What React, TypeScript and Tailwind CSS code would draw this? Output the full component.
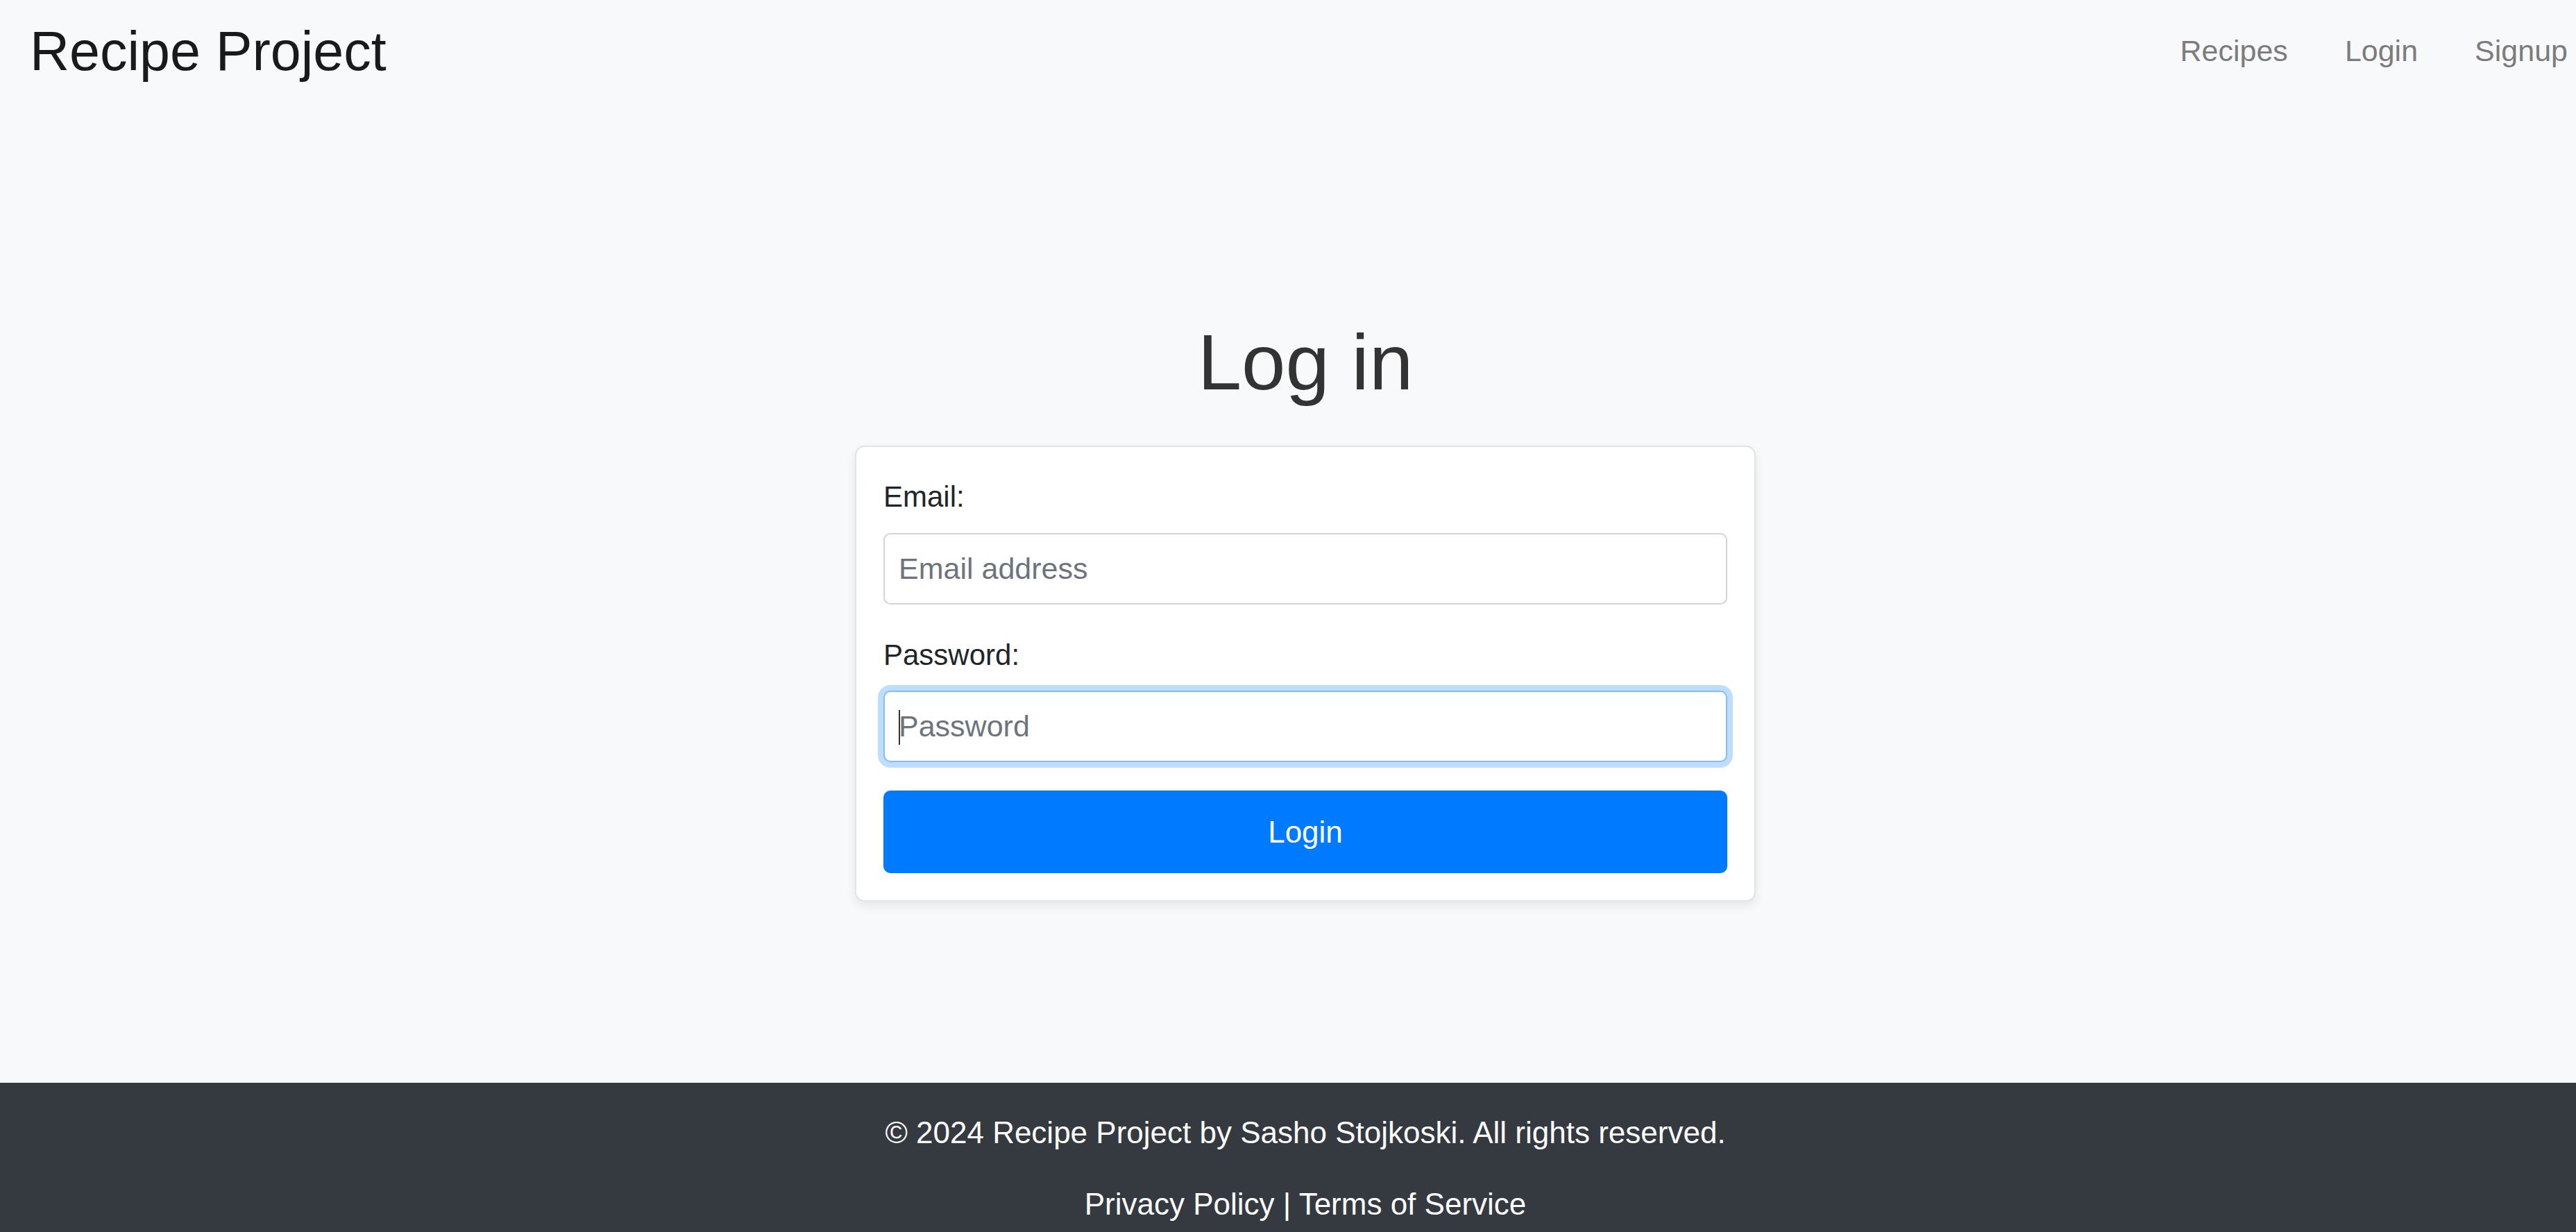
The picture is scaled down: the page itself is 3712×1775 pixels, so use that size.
import { useState } from 'react';

const font = { fontFamily: '"Liberation Sans", Arial, sans-serif' };

function Navbar() {
  return (
    <header className="h-[146px] flex items-center justify-between pl-[43px] pr-[12px]">
      <a href="#" className="text-[79px] leading-none text-[#191a1a]">
        Recipe Project
      </a>
      <nav className="flex items-center gap-[82px] text-[43px] leading-none text-[#7c7c7d]">
        <a href="#">Recipes</a>
        <a href="#">Login</a>
        <a href="#">Signup</a>
      </nav>
    </header>
  );
}

function LoginForm() {
  const [email, setEmail] = useState('');
  const [password, setPassword] = useState('');

  return (
    <div className="w-[1298px] bg-white border-2 border-[#e3e3e3] rounded-[14px] shadow-[0_6px_14px_rgba(0,0,0,0.08)] px-[39px] pt-[40px] pb-[39px]">
      <form onSubmit={(e) => e.preventDefault()} className="flex flex-col">
        <label className="text-[42px] leading-[63px] text-[#212529]">Email:</label>
        <input
          type="email"
          value={email}
          onChange={(e) => setEmail(e.target.value)}
          placeholder="Email address"
          className="mt-[21px] h-[103px] w-full rounded-[10px] border-2 border-[#d0d4d8] bg-white px-[20px] text-[43px] text-[#495057] placeholder:text-[#6c757d] outline-none"
        />
        <label className="mt-[41px] text-[42px] leading-[63px] text-[#212529]">Password:</label>
        <div className="relative mt-[20px]">
          <input
            type="password"
            value={password}
            onChange={(e) => setPassword(e.target.value)}
            placeholder="Password"
            className="h-[103px] w-full rounded-[10px] border-2 border-[#80bdff] bg-white px-[20px] text-[43px] text-[#495057] placeholder:text-[#6c757d] outline-none shadow-[0_0_0_8px_rgba(0,123,255,0.25)]"
          />
          {password === '' && (
            <span className="absolute left-[22px] top-[28px] h-[50px] w-[2px] bg-[#333]" />
          )}
        </div>
        <button
          type="submit"
          className="mt-[41px] h-[119px] w-full rounded-[10px] bg-[#007bff] text-[44px] text-white"
        >
          Login
        </button>
      </form>
    </div>
  );
}

export default function App() {
  return (
    <div style={font} className="h-[1775px] flex flex-col bg-[#f8f9fa] overflow-hidden">
      <Navbar />
      <main className="flex-1 flex flex-col items-center pl-[50px] pt-[319px]">
        <h1 className="text-[114px] leading-none text-[#333333]">Log in</h1>
        <div className="mt-[63px]">
          <LoginForm />
        </div>
      </main>
      <footer className="h-[215px] shrink-0 bg-[#343a40] pl-[50px] pt-[39px] text-center text-white text-[44px] leading-[66px]">
        <p>© 2024 Recipe Project by Sasho Stojkoski. All rights reserved.</p>
        <p className="mt-[37px]">
          <a href="#">Privacy Policy</a> | <a href="#">Terms of Service</a>
        </p>
      </footer>
    </div>
  );
}
